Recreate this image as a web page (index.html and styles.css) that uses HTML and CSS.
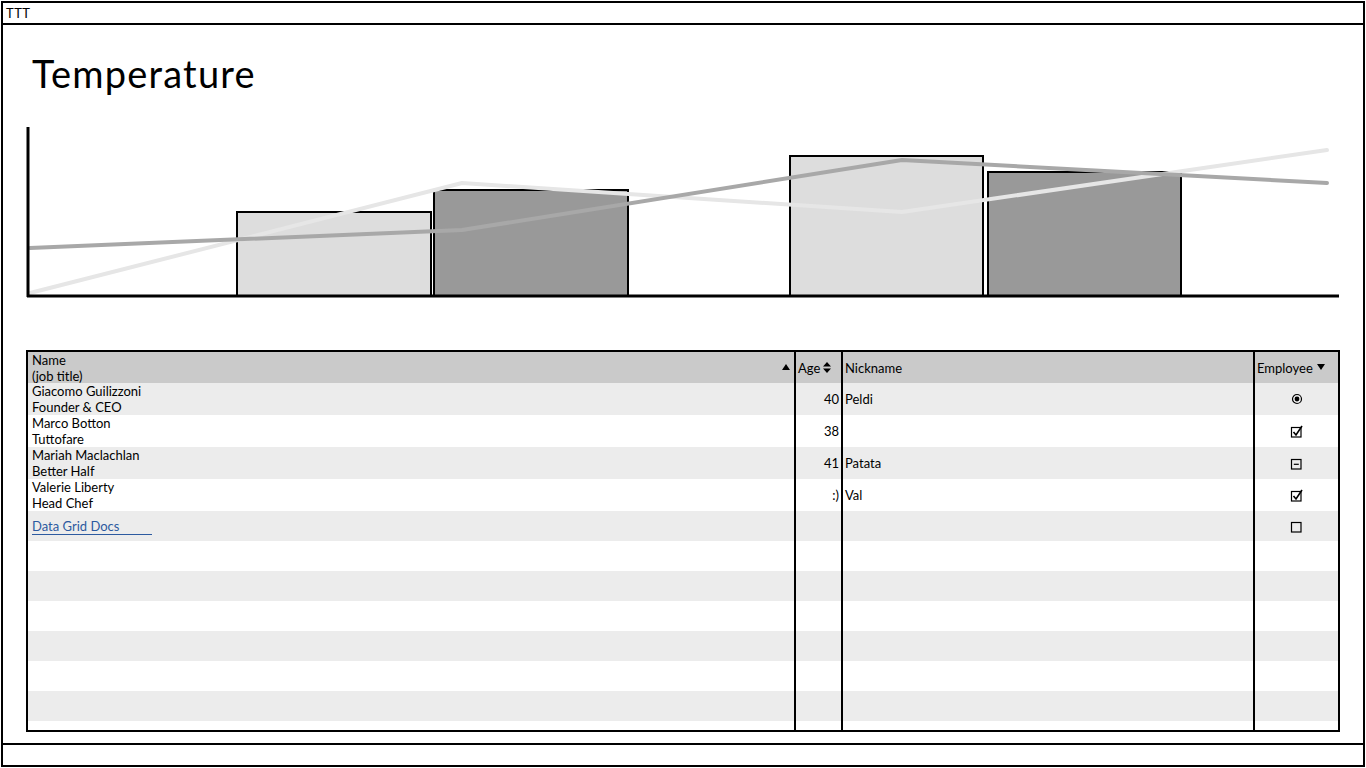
FILE: index.html
```html
<!DOCTYPE html>
<html>
<head>
<meta charset="utf-8">
<title>TTT</title>
<link rel="stylesheet" href="styles.css">
</head>
<body>
<div class="window">
  <div class="titlebar">TTT</div>
  <div class="main">
    <h1 class="title">Temperature</h1>
    <svg class="chart" width="1314" height="173" viewBox="26 125 1314 173">
      <rect x="237" y="212" width="194" height="84" fill="#dddddd" stroke="#000" stroke-width="2"/>
      <rect x="434" y="190" width="194" height="106" fill="#999999" stroke="#000" stroke-width="2"/>
      <rect x="790" y="156" width="193" height="140" fill="#dddddd" stroke="#000" stroke-width="2"/>
      <rect x="988" y="172" width="193" height="124" fill="#999999" stroke="#000" stroke-width="2"/>
      <polyline points="30,293 462,183 902,212 1327,150" fill="none" stroke="#e6e6e6" stroke-width="4" stroke-linecap="round" stroke-linejoin="round"/>
      <polyline points="30,248 462,230 902,160 1327,183" fill="none" stroke="#a8a8a8" stroke-width="4" stroke-linecap="round" stroke-linejoin="round"/>
      <line x1="28" y1="127" x2="28" y2="297" stroke="#000" stroke-width="3"/>
      <line x1="27" y1="296" x2="1339" y2="296" stroke="#000" stroke-width="3"/>
    </svg>
    <div class="grid">
      <div class="row head">
        <div class="cell name">
          <div class="two">Name<br>(job title)</div>
          <svg class="sort" width="8" height="6" viewBox="0 0 8 6"><path d="M0 6 L4 0 L8 6Z"/></svg>
        </div>
        <div class="cell age-h">Age<svg class="sort2" width="8" height="11" viewBox="0 0 8 11"><path d="M0 4.5 L4 0 L8 4.5Z M0 6.5 L8 6.5 L4 11Z"/></svg></div>
        <div class="cell nick">Nickname</div>
        <div class="cell emp-h">Employee<svg class="sort3" width="8" height="6" viewBox="0 0 8 6"><path d="M0 0 L8 0 L4 6Z"/></svg></div>
      </div>
      <div class="row data alt">
        <div class="cell name"><div class="two">Giacomo Guilizzoni<br>Founder &amp; CEO</div></div>
        <div class="cell age">40</div>
        <div class="cell nick">Peldi</div>
        <div class="cell emp"><svg width="12" height="12" viewBox="0 0 12 12"><circle cx="6" cy="6" r="4.5" fill="none" stroke="#000" stroke-width="1.2"/><circle cx="6" cy="6" r="2.4" fill="#000"/></svg></div>
      </div>
      <div class="row data">
        <div class="cell name"><div class="two">Marco Botton<br>Tuttofare</div></div>
        <div class="cell age">38</div>
        <div class="cell nick"></div>
        <div class="cell emp"><svg width="13" height="13" viewBox="0 0 13 13"><rect x="1.5" y="2.5" width="9.5" height="9.5" fill="none" stroke="#000" stroke-width="1.2"/><path d="M3.5 7 L6 10 L12 1" fill="none" stroke="#000" stroke-width="1.6"/></svg></div>
      </div>
      <div class="row data alt">
        <div class="cell name"><div class="two">Mariah Maclachlan<br>Better Half</div></div>
        <div class="cell age">41</div>
        <div class="cell nick">Patata</div>
        <div class="cell emp"><svg width="13" height="13" viewBox="0 0 13 13"><rect x="1.5" y="2.5" width="9.5" height="9.5" fill="none" stroke="#000" stroke-width="1.2"/><path d="M3.8 7.3 H8.8" fill="none" stroke="#000" stroke-width="1.2"/></svg></div>
      </div>
      <div class="row data">
        <div class="cell name"><div class="two">Valerie Liberty<br>Head Chef</div></div>
        <div class="cell age">:)</div>
        <div class="cell nick">Val</div>
        <div class="cell emp"><svg width="13" height="13" viewBox="0 0 13 13"><rect x="1.5" y="2.5" width="9.5" height="9.5" fill="none" stroke="#000" stroke-width="1.2"/><path d="M3.5 7 L6 10 L12 1" fill="none" stroke="#000" stroke-width="1.6"/></svg></div>
      </div>
      <div class="row short alt">
        <div class="cell name"><a class="link" href="#">Data Grid Docs</a></div>
        <div class="cell age"></div>
        <div class="cell nick"></div>
        <div class="cell emp"><svg width="13" height="13" viewBox="0 0 13 13"><rect x="1.5" y="2.5" width="9.5" height="9.5" fill="none" stroke="#000" stroke-width="1.2"/></svg></div>
      </div>
      <div class="row short"><div class="cell name"></div><div class="cell"></div><div class="cell"></div><div class="cell"></div></div>
      <div class="row short alt"><div class="cell name"></div><div class="cell"></div><div class="cell"></div><div class="cell"></div></div>
      <div class="row short"><div class="cell name"></div><div class="cell"></div><div class="cell"></div><div class="cell"></div></div>
      <div class="row short alt"><div class="cell name"></div><div class="cell"></div><div class="cell"></div><div class="cell"></div></div>
      <div class="row short"><div class="cell name"></div><div class="cell"></div><div class="cell"></div><div class="cell"></div></div>
      <div class="row short alt"><div class="cell name"></div><div class="cell"></div><div class="cell"></div><div class="cell"></div></div>
      <div class="row filler"><div class="cell name"></div><div class="cell"></div><div class="cell"></div><div class="cell"></div></div>
    </div>
  </div>
  <div class="statusbar"></div>
</div>
</body>
</html>
```
FILE: styles.css
```css
html, body {
  margin: 0;
  padding: 0;
  background: #fff;
}
body {
  font-family: "Lato", "Open Sans", "Liberation Sans", sans-serif;
  color: #000;
}
.window {
  margin: 1px;
  width: 1364px;
  height: 766px;
  box-sizing: border-box;
  border: 2px solid #000;
  display: flex;
  flex-direction: column;
}
.titlebar {
  height: 20px;
  border-bottom: 2px solid #000;
  font-size: 13px;
  line-height: 20px;
  padding-left: 3px;
  letter-spacing: 0.5px;
  flex: none;
}
.main {
  flex: 1;
  padding: 0 22px 0 23px;
  display: flex;
  flex-direction: column;
}
.title {
  margin: 0;
  height: 100px;
  box-sizing: border-box;
  padding: 26px 0 0 6px;
  font-size: 38px;
  font-weight: 400;
  line-height: 44px;
  letter-spacing: 1.2px;
  color: #000;
}
.chart {
  display: block;
  flex: none;
}
.grid {
  margin-top: 52px;
  width: 1314px;
  height: 382px;
  box-sizing: border-box;
  border: 2px solid #000;
  display: flex;
  flex-direction: column;
  font-size: 13px;
}
.row {
  display: grid;
  grid-template-columns: 766px 47px 412px 85px;
  flex: none;
  background: #fff;
}
.row.alt { background: #ececec; }
.row.head { background: #cacaca; height: 31px; }
.row.data { height: 32px; }
.row.short { height: 30px; }
.row.filler { flex: 1; }
.cell {
  border-left: 2px solid #000;
  display: flex;
  align-items: center;
  line-height: 16px;
  white-space: nowrap;
  min-width: 0;
}
.cell.name {
  border-left: none;
  padding-left: 4px;
  align-items: flex-start;
}
.row.head .cell.name {
  justify-content: space-between;
  align-items: flex-start;
  padding-right: 4px;
}
.row.short .cell.name { align-items: center; }
.sort { margin-top: 12px; }
.age {
  justify-content: flex-end;
  padding-right: 2px;
}
.age-h { padding-left: 2px; }
.sort2 { margin-left: 3px; margin-top: -1px; }
.nick { padding-left: 2px; }
.emp-h { padding-left: 2px; }
.sort3 { margin-left: 4px; margin-top: -3px; }
.emp { justify-content: center; }
.emp svg { display: block; }
.link {
  color: #2c5aa0;
  text-decoration: none;
  display: inline-block;
  width: 120px;
  border-bottom: 1px solid #2c5aa0;
  line-height: 15px;
  margin-top: 2px;
}
.statusbar {
  height: 20px;
  border-top: 2px solid #000;
  flex: none;
}
```
